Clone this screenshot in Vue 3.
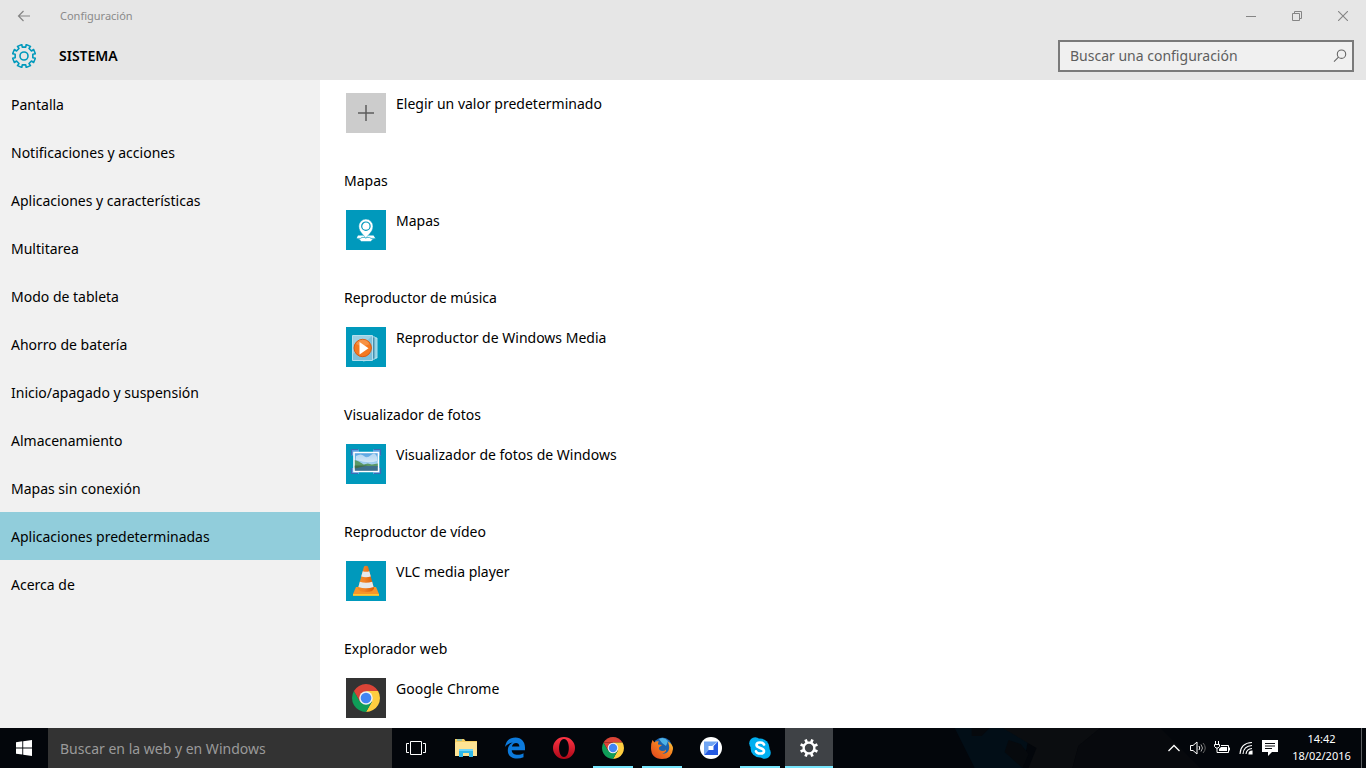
<script setup>
import { ref } from 'vue'

const query = ref('')
const webQuery = ref('')

const menu = [
  'Pantalla',
  'Notificaciones y acciones',
  'Aplicaciones y características',
  'Multitarea',
  'Modo de tableta',
  'Ahorro de batería',
  'Inicio/apagado y suspensión',
  'Almacenamiento',
  'Mapas sin conexión',
  'Aplicaciones predeterminadas',
  'Acerca de',
]
const current = ref(9)

const sections = [
  { title: '', app: 'Elegir un valor predeterminado', icon: 'plus' },
  { title: 'Mapas', app: 'Mapas', icon: 'maps' },
  { title: 'Reproductor de música', app: 'Reproductor de Windows Media', icon: 'wmp' },
  { title: 'Visualizador de fotos', app: 'Visualizador de fotos de Windows', icon: 'photos' },
  { title: 'Reproductor de vídeo', app: 'VLC media player', icon: 'vlc' },
  { title: 'Explorador web', app: 'Google Chrome', icon: 'chrome' },
]

const tasks = [
  { id: 'explorer', name: 'Explorador de archivos' },
  { id: 'edge', name: 'Microsoft Edge' },
  { id: 'opera', name: 'Opera' },
  { id: 'chrome', name: 'Google Chrome', open: true },
  { id: 'firefox', name: 'Firefox', open: true },
  { id: 'sync', name: 'Sincronización' },
  { id: 'skype', name: 'Skype', open: true },
  { id: 'settings', name: 'Configuración', open: true, active: true },
]

// Eight-toothed cog outline centred on (c, c)
function cog(c, outer, inner, top, base) {
  const pts = []
  for (let i = 0; i < 8; i++) {
    const a = (i * Math.PI) / 4 + Math.PI / 8
    for (const [r, d] of [[inner, -base], [outer, -top], [outer, top], [inner, base]]) {
      pts.push(`${(c + r * Math.sin(a + d)).toFixed(2)} ${(c - r * Math.cos(a + d)).toFixed(2)}`)
    }
  }
  return `M${pts.join('L')}Z`
}
const cogOutline = cog(12, 11.6, 9, 0.2, 0.2)
const cogSolid = cog(10, 9.2, 6.6, 0.15, 0.2)
</script>

<template>
  <div class="screen">
    <header class="top">
      <div class="titlebar">
        <button class="back" aria-label="Atrás">
          <svg width="14" height="12" viewBox="0 0 14 12"><path d="M13 6H1.5M6.5 1L1.5 6l5 5" fill="none" stroke="#858585" stroke-width="1.2" /></svg>
        </button>
        <span class="caption">Configuración</span>
        <div class="controls">
          <button aria-label="Minimizar"><svg width="10" height="10"><path d="M0 5.5h10" stroke="#858585" /></svg></button>
          <button aria-label="Restaurar"><svg width="10" height="10"><path d="M.5 2.5h7v7h-7zM2.5 2V.5h7v7H8" fill="none" stroke="#858585" /></svg></button>
          <button aria-label="Cerrar"><svg width="10" height="10"><path d="M0 0l10 10M10 0L0 10" stroke="#858585" stroke-width="1.1" /></svg></button>
        </div>
      </div>
      <div class="heading">
        <svg class="gear" width="24" height="24" viewBox="0 0 24 24" fill="none" stroke="#0099bc" stroke-width="1.6" stroke-linejoin="round">
          <path :d="cogOutline" /><circle cx="12" cy="12" r="4" />
        </svg>
        <h1>SISTEMA</h1>
        <label class="search">
          <input v-model="query" type="text" placeholder="Buscar una configuración" aria-label="Buscar una configuración" />
          <svg width="14" height="14" viewBox="0 0 14 14" fill="none" stroke="#666" stroke-width="1.1"><circle cx="8.500" cy="5.200" r="4.200" /><path d="M5.500 8.200L1 12.700" /></svg>
        </label>
      </div>
    </header>

    <div class="body">
      <nav class="side">
        <a v-for="(item, i) in menu" :key="item" href="#" :class="{ on: i === current }" @click.prevent="current = i">{{ item }}</a>
      </nav>
      <main class="content">
        <section v-for="s in sections" :key="s.app">
          <h2 v-if="s.title">{{ s.title }}</h2>
          <button class="app">
            <span class="tile" :class="s.icon">
              <svg v-if="s.icon === 'plus'" width="40" height="40"><path d="M12 20h16M20 12v16" stroke="#5c5c5c" stroke-width="1.5" /></svg>
              <svg v-else-if="s.icon === 'maps'" width="40" height="40" viewBox="0 0 40 40">
                <path d="M12 25.500h15.500l2 3-3.500 1-1 1.700h-10l-1-1.700-3.500-1z" fill="#fff" />
                <path d="M10 28.400h4.500l1.500-1h7.500l1.500 1h4.500" fill="none" stroke="#0099bc" stroke-width=".7" />
                <path d="M19.800 28.500c-1-3.200-7-6-7-12.300a7.100 7.100 0 0 1 14.200 0C27 22.500 21 25.300 19.800 28.500z" fill="#fff" stroke="#0099bc" stroke-width=".5" />
                <circle cx="19.900" cy="16.200" r="4.200" fill="none" stroke="#0099bc" stroke-width="1.200" />
              </svg>
              <svg v-else-if="s.icon === 'wmp'" width="40" height="40" viewBox="0 0 40 40">
                <path d="M18 9l13 2v20l-13 2z" fill="#78c6dc" stroke="#d8f3fa" stroke-width=".8" />
                <path d="M17 8.500l12 1.500v22l-12 2z" fill="#438fae" stroke="#bde6f1" stroke-width=".8" />
                <path d="M6.500 8.500h20v25h-20z" fill="#7ec0da" stroke="#b4dfed" />
                <path d="M7 9h19L7 27z" fill="#a9d7e8" opacity=".7" />
                <circle cx="16.700" cy="21" r="8.700" fill="#f47920" stroke="#d85a12" />
                <path d="M10 17a7.500 7.500 0 0 1 13.500 0q-7 4-13.500 0z" fill="#f9a45f" opacity=".6" />
                <path d="M13.500 15v12.500l9-6.200z" fill="#fff" />
              </svg>
              <svg v-else-if="s.icon === 'photos'" width="40" height="40" viewBox="0 0 40 40">
                <defs><linearGradient id="sky" x2="0" y2="1"><stop stop-color="#4e9fe0" /><stop offset="1" stop-color="#e2f3fb" /></linearGradient></defs>
                <path d="M5 5.500h8v6H5zM27 5.500h8v6h-8zM5 24h8v6H5zM27 24h8v6h-8z" fill="#5c9fe0" />
                <path d="M8 8.500h24.500v19H8z" fill="url(#sky)" stroke="#fff" stroke-width="1.600" />
                <path d="M10 12q5-3 8 0t7-1 6 2v4q-8 3-21-1z" fill="#fff" opacity=".55" />
                <path d="M8.800 16l4 1.500 5 3 4-1 4 1 6-1v3H8.800z" fill="#5b9866" />
                <path d="M8.800 22h23v4.800h-23z" fill="#3f708c" />
                <path d="M8.800 21.500h13l-13 3z" fill="#426f49" />
                <path d="M5.500 11.500v-6H12M28 5.500h6.500v6M5.500 24v5.500H12M28 29.500h6.500V24" fill="none" stroke="#3d6cb4" stroke-width="1.200" />
              </svg>
              <svg v-else-if="s.icon === 'vlc'" width="40" height="40" viewBox="0 0 40 40">
                <defs><linearGradient id="cone"><stop stop-color="#f58b1c" /><stop offset=".4" stop-color="#f08226" /><stop offset="1" stop-color="#d95c05" /></linearGradient></defs>
                <path d="M10 26h20l3 7v1.500H7V33z" fill="#f8952a" /><path d="M7 33h26v1.800H7z" fill="#ffc72f" />
                <path d="M18 5.500q2-1.500 4 0l6 22q-1 3.500-8 3.500t-8-3.500z" fill="url(#cone)" />
                <path d="M16.700 10.200q3.300 1 6.600 0l1.500 5.300q-4.800 1.500-9.600 0z" fill="#e5e9eb" />
                <path d="M13.800 20.700q6.200 2 12.400 0l1.400 5.300q-7.600 2.500-15.200 0z" fill="#e5e9eb" />
              </svg>
              <svg v-else width="40" height="40" viewBox="0 0 40 40">
                <g transform="translate(6 6)"><path d="M1.900 7A14 14 0 0 1 26.100 7H14z" fill="#db4437" /><path d="M26.100 7A14 14 0 0 1 14 28l6-10.500L14 7z" fill="#ffcd40" /><path d="M1.900 7A14 14 0 0 0 14 28l6-10.500-12 0z" fill="#0f9d58" /><path d="M1.900 7L8 17.500 14 7z" fill="#db4437" /><circle cx="14" cy="14" r="6.800" fill="#f1f1f1" /><circle cx="14" cy="14" r="5.300" fill="#4285f4" /></g>
              </svg>
            </span>
            <span class="label">{{ s.app }}</span>
          </button>
        </section>
      </main>
    </div>

    <footer class="taskbar">
      <svg class="wallpaper" viewBox="0 0 534 40" preserveAspectRatio="none" aria-hidden="true">
        <path d="M122 0h76l-8 40h-48z" fill="#020e17" /><path d="M139 0h18l-8 8h-10zM176 12l12 4 8 10-6 14-18-16z" fill="#06090d" />
        <path d="M170 0h98l-22 18-6 22h-44l8-20z" fill="#0b0d10" /><path d="M268 0h60l40 40H240l6-22z" fill="#07090d" />
      </svg>
      <button class="start" aria-label="Inicio">
        <svg width="16" height="16" viewBox="0 0 16 16" fill="#fff"><path d="M0 2.200L6.300 1.300v6.200H0zM7.200 1.200L16 0v7.500H7.200zM0 8.400h6.300v6.200L0 13.800zM7.200 8.400H16V16l-8.800-1.200z" /></svg>
      </button>
      <input v-model="webQuery" class="cortana" type="text" placeholder="Buscar en la web y en Windows" aria-label="Buscar en la web y en Windows" />
      <button class="view" aria-label="Vista de tareas">
        <svg width="20" height="14" fill="none" stroke="#fff"><path d="M4.500.5h11v13h-11zM3 2.500H.5v9H3M17 2.500h2.500v9H17" /></svg>
      </button>
      <div class="tasks">
        <button v-for="t in tasks" :key="t.id" :class="{ open: t.open, active: t.active }" :aria-label="t.name">
          <svg v-if="t.id === 'explorer'" width="22" height="20" viewBox="0 0 22 20">
            <path d="M0 1h9l1.500 2H22v15H0z" fill="#f5ce62" /><path d="M1 4h21v14H0V5z" fill="#fde394" /><path d="M2 2h5" stroke="#3bb5e8" stroke-width="1" />
            <path d="M4 11h14v8h-4v-4H8v4H4z" fill="#2fb9ea" /><path d="M4 11h14v2H4z" fill="#70d6f7" />
          </svg>
          <svg v-else-if="t.id === 'edge'" width="22" height="22" viewBox="0 0 22 22"><path d="M1 10C2 3.500 6 .5 11.500.5 17.500.5 21 5 21 10.500v2.700H7.700c.2 5 7 5.800 11.800 3v4C12 23.500 3.800 20.800 3.800 13.500c0-4 2.200-6.700 5-8C6 5.800 3 7.300 1 10zM7.900 9.500h7.500c0-4.700-6.500-4.500-7.500 0z" fill="#0c7adc" /></svg>
          <svg v-else-if="t.id === 'opera'" width="24" height="22" viewBox="0 0 24 22"><defs><linearGradient id="op" x2="0" y2="1"><stop stop-color="#ff3545" /><stop offset="1" stop-color="#ad0717" /></linearGradient></defs><path fill-rule="evenodd" d="M12 0a11 11 0 1 1 0 22 11 11 0 1 1 0-22zm0 2C5.500 2 5.500 20 12 20s6.500-18 0-18z" fill="url(#op)" /></svg>
          <svg v-else-if="t.id === 'chrome'" width="22" height="22" viewBox="0 0 28 28"><path d="M1.900 7A14 14 0 0 1 26.100 7H14z" fill="#db4437" /><path d="M26.100 7A14 14 0 0 1 14 28l6-10.500L14 7z" fill="#ffcd40" /><path d="M1.900 7A14 14 0 0 0 14 28l6-10.500-12 0z" fill="#0f9d58" /><path d="M1.900 7L8 17.500 14 7z" fill="#db4437" /><circle cx="14" cy="14" r="6.800" fill="#f1f1f1" /><circle cx="14" cy="14" r="5.300" fill="#4285f4" /></svg>
          <svg v-else-if="t.id === 'firefox'" width="22" height="22" viewBox="0 0 22 22">
            <defs><linearGradient id="fx" x1="0" y1="1" x2="1" y2="0"><stop stop-color="#e0401e" /><stop offset=".6" stop-color="#f58220" /><stop offset="1" stop-color="#ffd23e" /></linearGradient></defs>
            <circle cx="11.500" cy="10" r="9.500" fill="#1b62ad" /><path d="M8 2q5-3 9 2l-2 5-4-3z" fill="#4fb2e5" />
            <path d="M1.500 3l2 2.500Q5 3.500 8 4.500 6.500 6 7 7.500l4 .5-3 2.500q-.5 3 3 3.500 3 0 4-1.500.5 3-4 4c5 1 8-3 7-8l-1-4Q22 7 22 12 21 22 11 22 0 21.500 0 11 0 6 1.500 3z" fill="url(#fx)" />
          </svg>
          <svg v-else-if="t.id === 'sync'" width="22" height="22" viewBox="0 0 22 22"><circle cx="11" cy="11" r="11" fill="#fff" /><path d="M4 4.500h14l-6 4.500H8.500v4L4 17.500z" fill="#6fa4f3" /><path d="M18 4.500V18H4l4.500-5h5V9z" fill="#255be3" /></svg>
          <svg v-else-if="t.id === 'skype'" width="22" height="22" viewBox="0 0 22 22"><circle cx="11" cy="11" r="9.500" fill="#00aff0" /><circle cx="6.200" cy="6.200" r="6" fill="#00aff0" /><circle cx="15.800" cy="15.800" r="6" fill="#00aff0" /><path d="M15 7.500C14 4.800 7.500 4.700 7.500 8c0 3.600 7.500 2.200 7.500 6 0 3.400-7 3.300-8 .3" fill="none" stroke="#fff" stroke-width="2.600" stroke-linecap="round" /></svg>
          <svg v-else width="20" height="20" viewBox="0 0 20 20"><path fill-rule="evenodd" :d="cogSolid + 'M10 5.8a4.200 4.200 0 1 0 0 8.400 4.200 4.200 0 1 0 0-8.400z'" fill="#fff" /></svg>
        </button>
      </div>
      <div class="tray">
        <button aria-label="Mostrar iconos ocultos"><svg width="12" height="8" fill="none" stroke="#fff" stroke-width="1.300"><path d="M.5 7L6 1.500 11.500 7" /></svg></button>
        <button aria-label="Volumen"><svg width="16" height="14" fill="none" stroke="#fff"><path d="M.5 4.500h2.500l4-3.500v12l-4-3.500H.5z" /><path d="M9 5q1.500 2 0 4" /><path d="M11 3.500q3 3.500 0 7" stroke="#aaa" /><path d="M13 2q4.500 5 0 10" stroke="#666" /></svg></button>
        <button aria-label="Batería"><svg width="16" height="14" fill="none" stroke="#fff"><path d="M1.500 0v3M4.500 0v3M.5 3.500h5v2l-1.500 1.500h-2L.5 5.500zM3 7v4.500h11.500v-7H7" /><path d="M15.500 6.500v3" /><path d="M7 6h6v4H5V8z" fill="#fff" stroke="none" /></svg></button>
        <button aria-label="Red inalámbrica"><svg width="14" height="14" fill="none" stroke="#fff" stroke-width="1.100"><path d="M1 13Q1.500 2 13 1.500M4 13Q4.500 5 13 4.500M7 13q.5-5 6-5.500" /><path d="M10 13q0-3 3-3v3z" fill="#fff" /></svg></button>
        <button aria-label="Centro de actividades"><svg width="16" height="16"><path d="M0 0h16v12H10l-4 4v-4H0z" fill="#fff" /><path d="M3 3.500h10M3 6h10M3 8.500h7" stroke="#0a0c10" /></svg></button>
        <button class="clock"><span>14:42</span><span>18/02/2016</span></button>
      </div>
      <button class="desktop" aria-label="Mostrar escritorio"></button>
    </footer>
  </div>
</template>

<style>
body { margin: 0; overflow: hidden; }
</style>

<style scoped>
.screen, .screen button, .screen input { font-family: "Noto Sans", "Open Sans", sans-serif; font-size: 14px; }
.screen { display: flex; flex-direction: column; height: 100vh; color: #000; background: #fff; line-height: 20px; }
.screen * { box-sizing: border-box; }
.screen svg { display: block; flex: none; }
.screen button { display: flex; align-items: center; justify-content: center; padding: 0; border: 0; background: none; color: inherit; }
h1, h2 { margin: 0; font-weight: 400; font-size: 14px; line-height: 20px; }
input { outline: none; border: 0; }

.top { flex: none; background: #e6e6e6; }
.titlebar { display: flex; align-items: center; height: 32px; }
.back { width: 48px; height: 32px; }
.titlebar .caption { flex: 1; padding-left: 12px; font-size: 11px; color: #8a8a8a; }
.controls { display: flex; }
.controls button { width: 46px; height: 32px; }
.heading { display: flex; align-items: center; height: 48px; padding: 0 12px; }
.heading h1 { flex: 1; padding-left: 23px; font-weight: 600; }
.search { display: flex; align-items: center; width: 296px; height: 32px; padding: 0 5px 0 10px; border: 2px solid #7a7a7a; background: #f0f0f0; }
.search input { flex: 1; min-width: 0; padding: 0 0 2px; background: none; }
.search input::placeholder { color: #5e5e5e; opacity: 1; }

.body { flex: 1; display: flex; min-height: 0; }
.side { display: flex; flex-direction: column; flex: none; width: 320px; background: #f1f1f1; }
.side a { height: 48px; padding-left: 11px; line-height: 49px; color: #000; text-decoration: none; }
.side a.on { background: #91cddb; }
.content { flex: 1; overflow: hidden; padding: 13px 24px 0; }
section { display: flex; flex-direction: column; gap: 19px; margin-bottom: 38px; }
.screen .app { align-self: flex-start; align-items: flex-start; gap: 10px; padding-left: 2px; }
.tile { width: 40px; height: 40px; background: #0099bc; }
.tile.plus { background: #ccc; }
.tile.chrome { background: #333; }
.label { line-height: 22px; }

.taskbar { position: relative; display: flex; flex: none; height: 40px; background: #03060b; color: #fff; }
.taskbar > * { position: relative; flex: none; }
.taskbar .wallpaper { position: absolute; top: 0; right: 0; width: 39%; height: 40px; }
.start, .view { width: 48px; }
.cortana { width: 344px; padding: 0 12px; background: #333; color: #fff; }
.cortana::placeholder { color: #9a9a9a; opacity: 1; }
.tasks { display: flex; gap: 1px; margin-left: 2px; }
.tasks button { position: relative; width: 48px; height: 40px; }
.screen .tasks .active { background: #3f4246; }
.tasks .open::after { content: ""; position: absolute; bottom: 0; left: 4px; right: 4px; height: 2px; background: #76e5fc; }
.tasks .active::after { left: 0; right: 0; }
.tray { display: flex; margin-left: auto; }
.tray button { width: 24px; height: 40px; }
.screen .tray .clock { flex-direction: column; width: 79px; padding-bottom: 2px; font-size: 11px; line-height: 17px; }
.screen .desktop { width: 5px; border-left: 1px solid #5b5e62; }
</style>
